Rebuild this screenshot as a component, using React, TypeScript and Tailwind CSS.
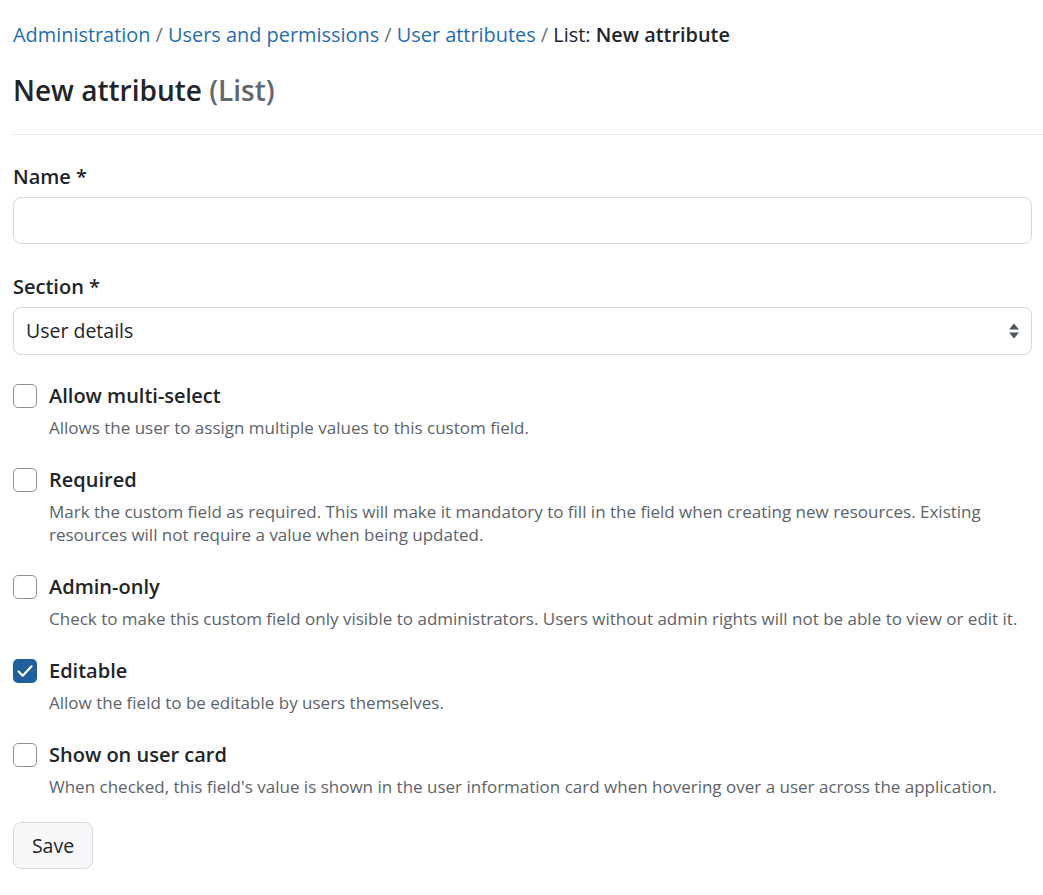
import React from "react";

const items = [
  { label: "Allow multi-select", desc: "Allows the user to assign multiple values to this custom field.", checked: false },
  { label: "Required", desc: "Mark the custom field as required. This will make it mandatory to fill in the field when creating new resources. Existing resources will not require a value when being updated.", checked: false },
  { label: "Admin-only", desc: "Check to make this custom field only visible to administrators. Users without admin rights will not be able to view or edit it.", checked: false },
  { label: "Editable", desc: "Allow the field to be editable by users themselves.", checked: true },
  { label: "Show on user card", desc: "When checked, this field's value is shown in the user information card when hovering over a user across the application.", checked: false },
];

function Box({ checked }: { checked: boolean }) {
  if (checked) {
    return (
      <span className="flex h-[24px] w-[24px] shrink-0 items-center justify-center rounded-[5px] bg-[#1d5f9f]">
        <svg width="20" height="20" viewBox="0 0 20 20" fill="none">
          <path d="M3.5 10.5l4.2 4.2 8.8-9.4" stroke="white" strokeWidth="2.2" strokeLinecap="round" strokeLinejoin="round" />
        </svg>
      </span>
    );
  }
  return <span className="block h-[24px] w-[24px] shrink-0 rounded-[5px] border-[1.5px] border-[#8a929c] bg-white" />;
}

export default function App() {
  return (
    <div className="min-h-[895px] bg-white text-[#212529]" style={{ fontFamily: '"Open Sans", "Noto Sans", sans-serif' }}>
      <div className="pl-[13px] pt-[21px]">
        <div className="h-[28px] text-[19.9px] leading-[28px] whitespace-nowrap">
          <span className="text-[#1f6db3]">Administration</span>
          <span className="text-[#6c757d]"> / </span>
          <span className="text-[#1f6db3]">Users and permissions</span>
          <span className="text-[#6c757d]"> / </span>
          <span className="text-[#1f6db3]">User attributes</span>
          <span className="text-[#6c757d]"> / </span>
          <span>List: </span>
          <span className="font-semibold">New attribute</span>
        </div>
        <h1 className="mt-[23px] h-[36px] text-[28px] font-semibold leading-[36px]">
          New attribute <span className="text-[#5f6770]">(List)</span>
        </h1>
      </div>
      <div className="ml-[13px] mt-[26px] h-px bg-[#e2e5e9]" />
      <div className="pl-[13px] pr-[11px]">
        <div className="mt-[28px] h-[28px] text-[20px] font-semibold leading-[28px]">Name *</div>
        <div className="mt-[6px] h-[47px] rounded-[8px] border border-[#d3d8de] bg-white" />
        <div className="mt-[29px] h-[28px] text-[20px] font-semibold leading-[28px]">Section *</div>
        <div className="mt-[6px] flex h-[48px] items-center justify-between rounded-[8px] border border-[#d3d8de] bg-white pl-[12px] pr-[10px] text-[19.5px]">
          <span>User details</span>
          <svg width="14" height="20" viewBox="0 0 14 20" fill="#4d5560">
            <path d="M7 2.5L12 8.5H2Z" />
            <path d="M7 17.5L12 11.5H2Z" />
          </svg>
        </div>
        <div className="mt-[27px] flex flex-col gap-[27px]">
          {items.map((it) => (
            <div key={it.label}>
              <div className="flex h-[28px] items-center gap-[12px]">
                <Box checked={it.checked} />
                <span className="text-[20px] font-semibold leading-[28px]">{it.label}</span>
              </div>
              <div className="mt-[6px] pl-[36px] text-[17px] leading-[23px] text-[#5c636b]">{it.desc}</div>
            </div>
          ))}
        </div>
        <button className="mt-[24px] h-[47px] w-[80px] rounded-[8px] border border-[#d3d8de] bg-[#f6f7f9] text-[19.5px] text-[#212529]">
          Save
        </button>
      </div>
    </div>
  );
}
